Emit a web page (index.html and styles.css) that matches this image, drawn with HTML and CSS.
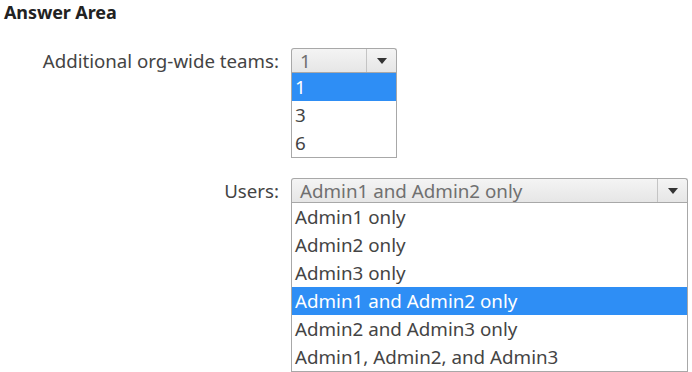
FILE: index.html
```html
<!DOCTYPE html>
<html lang="en">
<head>
    <meta charset="UTF-8">
    <meta name="viewport" content="width=device-width, initial-scale=1.0">
    <title>Answer Area</title>
    <link rel="stylesheet" href="styles.css">
</head>
<body>
    <div class="answer-area">
        <h2 class="title">Answer Area</h2>

        <div class="answer-grid">
            <div class="field-label">Additional org-wide teams:</div>
            <div class="dropdown dropdown-teams">
                <div class="dropdown-value">
                    <span class="value-text">1</span>
                    <span class="dropdown-btn"><span class="arrow"></span></span>
                </div>
                <ul class="dropdown-list">
                    <li class="selected">1</li>
                    <li>3</li>
                    <li>6</li>
                </ul>
            </div>

            <div class="field-label">Users:</div>
            <div class="dropdown dropdown-users">
                <div class="dropdown-value">
                    <span class="value-text">Admin1 and Admin2 only</span>
                    <span class="dropdown-btn"><span class="arrow"></span></span>
                </div>
                <ul class="dropdown-list">
                    <li>Admin1 only</li>
                    <li>Admin2 only</li>
                    <li>Admin3 only</li>
                    <li class="selected">Admin1 and Admin2 only</li>
                    <li>Admin2 and Admin3 only</li>
                    <li>Admin1, Admin2, and Admin3</li>
                </ul>
            </div>
        </div>
    </div>
</body>
</html>
```

FILE: styles.css
```css
* {
    margin: 0;
    padding: 0;
    box-sizing: border-box;
}

body {
    font-family: 'Noto Sans', 'Open Sans', sans-serif;
    background: #fff;
    color: #444;
}

.answer-area {
    padding: 1px 4px;
}

.title {
    font-size: 18px;
    font-weight: 700;
    line-height: 22px;
    color: #222;
    letter-spacing: -0.1px;
}

.answer-grid {
    display: grid;
    grid-template-columns: 275px auto;
    column-gap: 12px;
    row-gap: 20px;
    margin-top: 25px;
    justify-content: start;
}

.field-label {
    text-align: right;
    font-size: 18.7px;
    line-height: 26px;
    color: #444;
}

.dropdown {
    font-size: 18.8px;
}

.dropdown-teams {
    width: 106px;
}

.dropdown-users {
    width: 397px;
}

.dropdown-value {
    display: flex;
    height: 24px;
    border: 1px solid #a8a8a8;
    border-bottom: none;
    border-radius: 3px 3px 0 0;
    background: linear-gradient(#f4f4f4, #e6e6e6);
}

.value-text {
    flex: 1;
    padding-left: 8px;
    line-height: 24px;
    color: #707070;
}

.dropdown-btn {
    width: 30px;
    border-left: 1px solid #c4c4c4;
    display: flex;
    align-items: center;
    justify-content: center;
}

.arrow {
    width: 0;
    height: 0;
    border-left: 5px solid transparent;
    border-right: 5px solid transparent;
    border-top: 6px solid #333;
}

.dropdown-list {
    list-style: none;
    border: 1px solid #a8a8a8;
    background: #fff;
}

.dropdown-list li {
    height: 28px;
    line-height: 28px;
    padding-left: 3px;
    color: #444;
}

.dropdown-list li.selected {
    background: #2e8ef5;
    color: #fff;
}
```
